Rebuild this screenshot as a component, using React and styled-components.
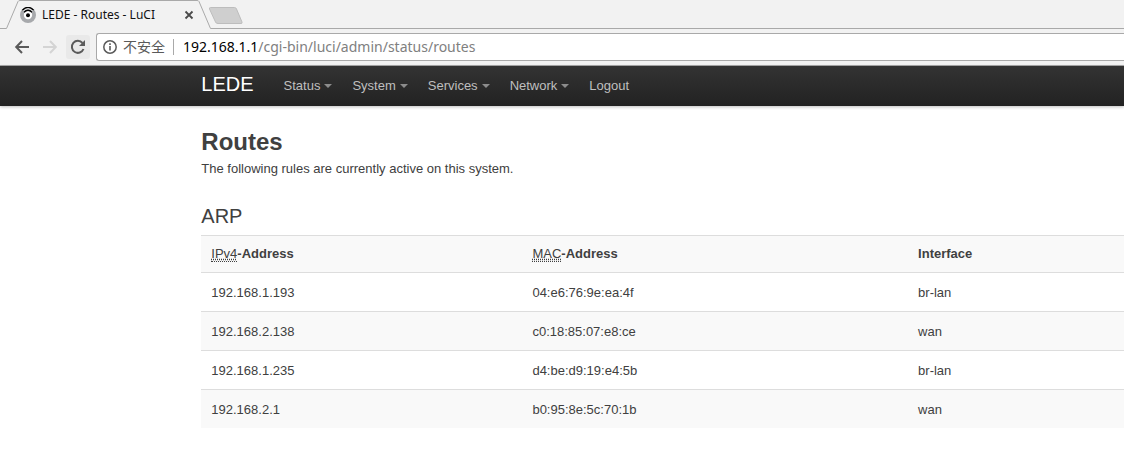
import React from "react";
import styled, { createGlobalStyle } from "styled-components";

const Global = createGlobalStyle`
  *, *::before, *::after { box-sizing: border-box; }
  body {
    margin: 0;
    background: #fff;
    color: #404040;
    font: 13px/18px "Liberation Sans", Arial, sans-serif;
    overflow-x: hidden;
  }
  button { border: 0; padding: 0; background: none; color: inherit; font: inherit; }
  a { color: inherit; text-decoration: none; }
`;

const browserFont = `"Noto Sans", "Noto Sans CJK SC", sans-serif`;

const Browser = styled.div`
  background: #f2f2f2;
  border-bottom: 1px solid #a9a9a9;
  font-family: ${browserFont};
`;

const TabStrip = styled.div`
  display: flex;
  height: 29px;
  &::before {
    content: "";
    width: 5px;
    border-bottom: 1px solid #a9a9a9;
  }
`;

const TabEdge = styled.svg`
  flex: none;
  width: 15px;
  height: 29px;
  display: block;
`;

const TabBody = styled.div`
  display: flex;
  align-items: center;
  width: 177px;
  border-top: 1px solid #a9a9a9;
  color: #111;
  font-size: 12px;
  line-height: 18px;
`;

const TabTitle = styled.span`
  flex: 1;
  padding-left: 6px;
  white-space: nowrap;
`;

const TabClose = styled.button`
  display: flex;
  margin-right: 3px;
`;

const StripRest = styled.div`
  flex: 1;
  border-bottom: 1px solid #a9a9a9;
`;

const NewTab = styled.button`
  display: block;
  margin-left: -3px;
  padding-top: 7px;
`;

const Toolbar = styled.form`
  display: flex;
  align-items: center;
  height: 36px;
  padding-left: 10px;
`;

const ToolButton = styled.button`
  display: flex;
  align-items: center;
  justify-content: center;
  width: 24px;
  height: 24px;
  margin-right: 4px;
  border-radius: 3px;
  background: ${(p) => (p.$active ? "#e9e9e9" : "transparent")};
`;

const Omnibox = styled.div`
  flex: 1;
  display: flex;
  align-items: center;
  height: 28px;
  margin-left: 2px;
  padding-left: 6px;
  border: 1px solid #a9a9a9;
  border-right: 0;
  border-radius: 3px 0 0 3px;
  background: #fff;
  white-space: nowrap;
`;

const Security = styled.span`
  padding: 0 8px 2px 6px;
  color: #5a5a5a;
  font: 14px/16px "Noto Sans CJK SC", sans-serif;
`;

const Address = styled.div`
  padding-left: 9px;
  border-left: 1px solid #a9a9a9;
  color: #808080;
  font-size: 14px;
  line-height: 16px;
`;

const Host = styled.span`
  color: #000;
`;

const Header = styled.header`
  display: flex;
  align-items: center;
  height: 40px;
  padding-left: calc(18% - 1px);
  background: linear-gradient(#333, #222);
  box-shadow: 0 1px 3px rgba(0, 0, 0, 0.25);
`;

const Brand = styled.a`
  padding-right: 20px;
  padding-bottom: 4px;
  color: #fff;
  font-size: 20px;
  line-height: 20px;
`;

const Nav = styled.nav`
  display: flex;
`;

const NavLink = styled.a`
  display: flex;
  align-items: center;
  padding: 0 10px;
  color: #bfbfbf;
`;

const Caret = styled.span`
  margin-left: 4px;
  border: 4px solid transparent;
  border-top-color: #8c8c8c;
  border-bottom: 0;
`;

const Main = styled.main`
  padding: 18px 0 24px calc(18% - 1px);
`;

const Title = styled.h2`
  margin: 0;
  font-size: 24px;
  line-height: 36px;
`;

const Description = styled.p`
  margin: 0 0 20px;
`;

const Legend = styled.h3`
  margin: 0;
  font-size: 20px;
  font-weight: 400;
  line-height: 37px;
`;

const Table = styled.table`
  width: 100%;
  table-layout: fixed;
  border-spacing: 0;
  th, td {
    border-top: 1px solid #ddd;
    text-align: left;
  }
  th {
    padding: 9px 10px;
    background: #f9f9f9;
  }
  td {
    padding: 11px 10px 9px;
  }
`;

const Row = styled.tr`
  background: ${(p) => (p.$shaded ? "#f9f9f9" : "#fff")};
`;

const Col = styled.col`
  width: ${(p) => p.$width};
`;

const Abbr = styled.abbr`
  border-bottom: 1px dotted #404040;
  font-weight: 400;
  text-decoration: underline dotted;
`;

const MENU = [
  ["Status", true],
  ["System", true],
  ["Services", true],
  ["Network", true],
  ["Logout", false],
];

const ARP = [
  ["192.168.1.193", "04:e6:76:9e:ea:4f", "br-lan"],
  ["192.168.2.138", "c0:18:85:07:e8:ce", "wan"],
  ["192.168.1.235", "d4:be:d9:19:e4:5b", "br-lan"],
  ["192.168.2.1", "b0:95:8e:5c:70:1b", "wan"],
];

const Favicon = () => (
  <svg width="16" height="16" viewBox="0 0 16 16" aria-hidden="true">
    <circle cx="8" cy="8" r="8" fill="#a7a9ac" />
    <circle cx="8" cy="8" r="4.200" fill="#fff" />
    <circle cx="8" cy="8.300" r="2" fill="#000" />
    <path d="M2.500 3.200Q8-2.200 13.500 3.200" fill="none" stroke="#000" strokeWidth="1.600" />
    <path d="M3 4.300Q8-.8 13 4.300" fill="none" stroke="#fff" strokeWidth="1" />
    <path d="M4 5.300Q8 1.200 12 5.300" fill="none" stroke="#000" strokeWidth="1.400" />
  </svg>
);

function BrowserBar() {
  return (
    <Browser>
      <TabStrip>
        <TabEdge viewBox="0 0 15 29" aria-hidden="true">
          <path d="M0 28.500H1.500L13 1.500Q13.500 .5 15 .5" fill="none" stroke="#a9a9a9" />
        </TabEdge>
        <TabBody>
          <Favicon />
          <TabTitle>LEDE - Routes - LuCI</TabTitle>
          <TabClose aria-label="Close tab">
            <svg width="10" height="10" viewBox="0 0 10 10">
              <path d="M1.500 1.500L8.500 8.500M8.500 1.500L1.500 8.500" stroke="#4a4a4a" strokeWidth="1.800" />
            </svg>
          </TabClose>
        </TabBody>
        <TabEdge viewBox="0 0 15 29" aria-hidden="true">
          <path d="M0 .5Q1.500 .5 2 1.500L13.500 28.500H15" fill="none" stroke="#a9a9a9" />
        </TabEdge>
        <StripRest>
          <NewTab aria-label="New tab">
            <svg width="34" height="18" viewBox="0 0 34 18">
              <path d="M1.500 .5H25.500Q27 .5 27.500 2L33 15Q33.500 16.500 32 16.500H9Q7 16.500 6.500 15L.5 2Q0 .5 1.500 .5Z" fill="#cfcfcf" stroke="#bdbdbd" />
            </svg>
          </NewTab>
        </StripRest>
      </TabStrip>
      <Toolbar>
        <ToolButton type="button" aria-label="Back">
          <svg width="16" height="16" viewBox="0 0 16 16">
            <path d="M15 8H2.500M8 2L2.200 8L8 14" fill="none" stroke="#5a5a5a" strokeWidth="2" />
          </svg>
        </ToolButton>
        <ToolButton type="button" aria-label="Forward">
          <svg width="16" height="16" viewBox="0 0 16 16">
            <path d="M1 8H13.500M8 2L13.800 8L8 14" fill="none" stroke="#d4d4d4" strokeWidth="2" />
          </svg>
        </ToolButton>
        <ToolButton type="button" aria-label="Reload" $active>
          <svg width="16" height="16" viewBox="0 0 16 16">
            <path d="M13.500 10A6 6 0 1 1 12.500 4" fill="none" stroke="#5a5a5a" strokeWidth="2" />
            <path d="M15 1V7H9Z" fill="#5a5a5a" />
          </svg>
        </ToolButton>
        <Omnibox>
          <svg width="14" height="14" viewBox="0 0 14 14" aria-hidden="true">
            <circle cx="7" cy="7" r="6.200" fill="none" stroke="#5a5a5a" strokeWidth="1.500" />
            <path d="M7 6V10.500M7 3.300V5" stroke="#5a5a5a" strokeWidth="1.600" />
          </svg>
          <Security>不安全</Security>
          <Address
            role="textbox"
            aria-label="Address"
            contentEditable
            suppressContentEditableWarning
            spellCheck={false}
          >
            <Host>192.168.1.1</Host>/cgi-bin/luci/admin/status/routes
          </Address>
        </Omnibox>
      </Toolbar>
    </Browser>
  );
}

export default function App() {
  return (
    <>
      <Global />
      <BrowserBar />
      <Header>
        <Brand href="#">LEDE</Brand>
        <Nav>
          {MENU.map(([label, menu]) => (
            <NavLink href="#" key={label}>
              {label}
              {menu && <Caret />}
            </NavLink>
          ))}
        </Nav>
      </Header>
      <Main>
        <Title>Routes</Title>
        <Description>The following rules are currently active on this system.</Description>
        <Legend>ARP</Legend>
        <Table>
          <colgroup>
            <Col $width="34.8%" />
            <Col $width="41.8%" />
            <Col />
          </colgroup>
          <thead>
            <tr>
              <th><Abbr title="Internet Protocol Version 4">IPv4</Abbr>-Address</th>
              <th><Abbr title="Media Access Control">MAC</Abbr>-Address</th>
              <th>Interface</th>
            </tr>
          </thead>
          <tbody>
            {ARP.map((row, i) => (
              <Row key={row[0]} $shaded={i % 2 === 1}>
                {row.map((cell) => (
                  <td key={cell}>{cell}</td>
                ))}
              </Row>
            ))}
          </tbody>
        </Table>
      </Main>
    </>
  );
}
